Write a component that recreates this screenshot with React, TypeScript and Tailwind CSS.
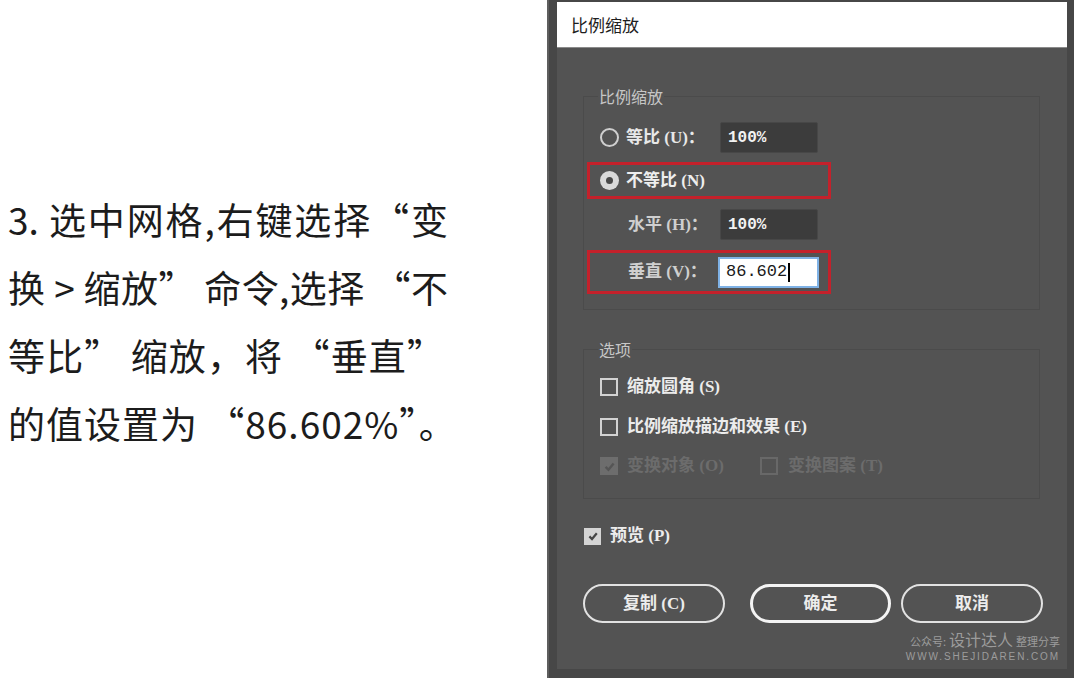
import React from "react";

const Tick = ({ className }: { className?: string }) => (
  <svg viewBox="0 0 12 12" className={className}>
    <path d="M2.4 6.4 L5 9 L9.8 3.2" fill="none" stroke="currentColor" strokeWidth="2.2" />
  </svg>
);

const Radio = ({ checked }: { checked?: boolean }) =>
  checked ? (
    <span className="flex h-[19px] w-[19px] shrink-0 items-center justify-center rounded-full bg-[#dadada]">
      <span className="h-[7px] w-[7px] rounded-full bg-[#4a4a4a]" />
    </span>
  ) : (
    <span className="h-[19px] w-[19px] shrink-0 rounded-full border-2 border-[#cfcfcf]" />
  );

const Box = ({ checked, disabled }: { checked?: boolean; disabled?: boolean }) => {
  if (disabled && checked)
    return (
      <span className="flex h-[18px] w-[18px] shrink-0 items-center justify-center bg-[#6d6d6d] text-[#555555]">
        <Tick className="h-[13px] w-[13px]" />
      </span>
    );
  return (
    <span
      className={`h-[18px] w-[18px] shrink-0 border-2 ${disabled ? "border-[#686868]" : "border-[#d2d2d2]"}`}
    />
  );
};

const Field = ({ value }: { value: string }) => (
  <div className="flex h-[31px] w-[98px] items-center rounded-[2px] border border-[#474747] bg-[#3c3c3c] pl-[7px] font-['Liberation_Mono',monospace] text-[16px] font-bold text-[#f2f2f2]">
    {value}
  </div>
);

const Btn = ({ label, primary, w }: { label: string; primary?: boolean; w: string }) => (
  <div
    className={`flex h-[39px] items-center justify-center rounded-full ${w} ${
      primary ? "border-[3px] border-[#f4f4f4]" : "border-2 border-[#e2e2e2]"
    } text-[17px] font-semibold text-[#ececec]`}
  >
    {label}
  </div>
);

export default function App() {
  return (
    <div className="flex h-[678px] w-[1080px] bg-white">
      {/* instruction text */}
      <div className="w-[547px] shrink-0 whitespace-nowrap pl-[8px] pt-[185px] font-['Noto_Sans_CJK_SC',sans-serif] text-[37px] leading-[68px] text-[#1c1c1c]">
        <div className="w-[440px] text-justify [text-align-last:justify]">3. 选中网格,右键选择“变</div>
        <div className="w-[440px] text-justify [text-align-last:justify]">换 &gt; 缩放” 命令,选择 “不</div>
        <div className="w-[436px] text-justify [text-align-last:justify]">等比” 缩放，将 “垂直”</div>
        <div className="tracking-[1px]">的值设置为 “86.602%”。</div>
      </div>

      {/* dialog */}
      <div className="flex h-[678px] w-[527px] shrink-0 flex-col border-l-2 border-[#5e5e5e] bg-[#474747] pb-[9px] pl-[8px] pr-[7px] pt-[2px] font-['Liberation_Serif','Noto_Sans_CJK_SC',serif]">
        <div className="flex h-[46px] shrink-0 items-center border-b border-[#8a8a8a] bg-white pl-[14px] font-['Noto_Sans_CJK_SC',sans-serif] text-[17px] text-[#1e1e1e]">
          比例缩放
        </div>
        <div className="flex flex-1 flex-col bg-[#535353] pl-[26px] pr-[7px]">
          <fieldset className="mt-[38px] w-[457px] border border-[#4b4b4b] px-[3px] pb-[15px]">
            <legend className="ml-[11px] px-[1px] font-['Noto_Sans_CJK_SC',sans-serif] text-[16px] leading-[20px] text-[#c6c6c6]">
              比例缩放
            </legend>
            <div className="mt-[16px] flex h-[31px] items-center pl-[13px]">
              <div className="flex w-[120px] items-center gap-[7px] text-[17px] font-semibold text-[#e8e8e8]">
                <Radio />
                <span>等比 (U)：</span>
              </div>
              <Field value="100%" />
            </div>
            <div className="mt-[9px] flex h-[37px] w-[244px] items-center border-[3px] border-[#c4212b] pl-[10px]">
              <div className="flex items-center gap-[7px] text-[17px] font-semibold text-[#eeeeee]">
                <Radio checked />
                <span>不等比 (N)</span>
              </div>
            </div>
            <div className="mt-[10px] flex h-[31px] items-center pl-[41px]">
              <div className="w-[92px] text-[17px] font-semibold text-[#cfcfcf]">水平 (H)：</div>
              <Field value="100%" />
            </div>
            <div className="mt-[10px] flex h-[44px] w-[244px] items-center border-[3px] border-[#c4212b] pl-[38px]">
              <div className="w-[90px] text-[17px] font-semibold text-[#cfcfcf]">垂直 (V)：</div>
              <div className="flex h-[31px] w-[101px] items-center border-2 border-[#7fb2e6] bg-white pl-[6px] font-['Liberation_Mono',monospace] text-[17px] text-[#1a1a1a]">
                86.602
                <span className="ml-[1px] h-[19px] w-[2px] bg-black" />
              </div>
            </div>
          </fieldset>

          <fieldset className="mt-[29px] w-[457px] border border-[#4b4b4b] px-[3px] pb-[20px]">
            <legend className="ml-[11px] px-[1px] font-['Noto_Sans_CJK_SC',sans-serif] text-[16px] leading-[20px] text-[#c6c6c6]">
              选项
            </legend>
            <div className="mt-[16px] flex h-[24px] items-center gap-[9px] pl-[13px] text-[17px] font-semibold text-[#ececec]">
              <Box />
              <span>缩放圆角 (S)</span>
            </div>
            <div className="mt-[16px] flex h-[24px] items-center gap-[9px] pl-[13px] text-[17px] font-semibold text-[#ececec]">
              <Box />
              <span>比例缩放描边和效果 (E)</span>
            </div>
            <div className="mt-[15px] flex h-[24px] items-center pl-[13px] text-[17px] font-semibold text-[#6c6c6c]">
              <Box checked disabled />
              <span className="ml-[9px] w-[133px]">变换对象 (O)</span>
              <Box disabled />
              <span className="ml-[10px]">变换图案 (T)</span>
            </div>
          </fieldset>

          <div className="mt-[25px] flex h-[24px] items-center gap-[9px] pl-[1px] text-[17px] font-semibold text-[#ececec]">
            <span className="flex h-[17px] w-[17px] items-center justify-center bg-[#d4d4d4] text-[#454545]">
              <Tick className="h-[12px] w-[12px]" />
            </span>
            <span>预览 (P)</span>
          </div>

          <div className="mt-[36px] flex items-center">
            <Btn label="复制 (C)" w="w-[142px]" />
            <div className="ml-[25px]">
              <Btn label="确定" primary w="w-[141px]" />
            </div>
            <div className="ml-[10px]">
              <Btn label="取消" w="w-[142px]" />
            </div>
          </div>

          <div className="mt-[8px] flex flex-col items-end self-end font-['Noto_Sans_CJK_SC',sans-serif] text-[#9c9c9c]">
            <div className="flex items-baseline gap-[3px] leading-[17px]">
              <span className="text-[11px]">公众号:</span>
              <span className="text-[16px]">设计达人</span>
              <span className="text-[11px]">整理分享</span>
            </div>
            <div className="font-['Liberation_Sans',sans-serif] text-[10px] leading-[14px] tracking-[1.9px]">
              WWW.SHEJIDAREN.COM
            </div>
          </div>
        </div>
      </div>
    </div>
  );
}
